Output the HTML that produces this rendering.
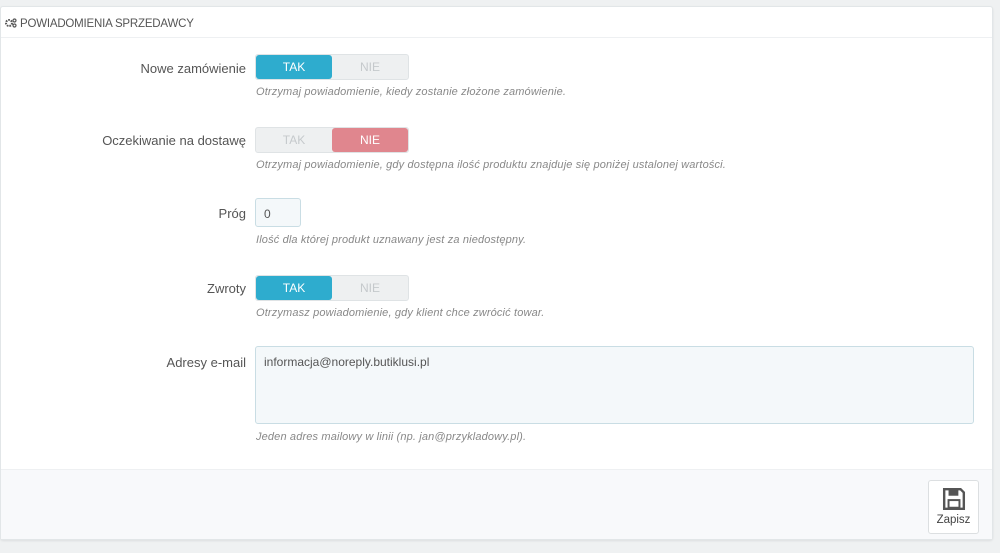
<!DOCTYPE html>
<html><head><meta charset="utf-8"><style>
*{box-sizing:border-box;margin:0;padding:0}
body{width:1000px;height:553px;background:#eff1f2;font-family:"Liberation Sans",sans-serif;position:relative;overflow:hidden;color:#555}
.panel{position:absolute;left:0;top:6px;width:993px;height:534px;background:#fff;border:1px solid #e2e6e8;border-radius:3px;box-shadow:0 1px 2px rgba(0,0,0,.08)}
.hd{position:absolute;left:0;top:0;right:0;height:31px;border-bottom:1px solid #eef0f2;font-size:11.5px;color:#555;padding:11px 0 0 4px;letter-spacing:-.2px}
.lbl{position:absolute;right:754px;font-size:13px;color:#555;text-align:right;white-space:nowrap}
.tg{position:absolute;left:255px;width:154px;height:26px;border-radius:3px;background:#eef0f1;border:1px solid #dfe3e5;display:flex;font-size:12px}
.tg span{flex:1;text-align:center;line-height:24px;color:#c5c9cc}
.tg .on{background:#2eacce;color:#fff;border-radius:3px}
.tg .no{background:#e0868e;color:#fff;border-radius:3px}
.help{position:absolute;left:256px;font-size:11px;font-style:italic;color:#888;letter-spacing:.15px}
.inp{position:absolute;left:255px;top:198px;width:46px;height:29px;background:#f4f8fa;border:1px solid #c9dde4;border-radius:3px;font-size:12px;color:#555;padding:8px 0 0 8px}
.ta{position:absolute;left:255px;top:346px;width:719px;height:78px;background:#f4f8fa;border:1px solid #c9dde4;border-radius:3px;font-size:12px;color:#555;padding:8px 0 0 8px}
.ft{position:absolute;left:0;right:0;top:462px;bottom:0;background:#f8f9fb;border-top:1px solid #eef0f2}
.btn{position:absolute;left:928px;top:480px;width:51px;height:54px;background:#fff;border:1px solid #dcdfe1;border-radius:3px;font-size:11.5px;color:#444;text-align:center}
</style></head><body>
<div class="panel">
<div class="hd"><svg width="12" height="10" viewBox="0 0 12 10" style="vertical-align:-1px"><circle cx="4" cy="5" r="3" fill="none" stroke="#555" stroke-width="2" stroke-dasharray="1.6 1"/><circle cx="9.5" cy="2.5" r="1.5" fill="none" stroke="#555" stroke-width="1.2"/><circle cx="9.5" cy="7.5" r="1.5" fill="none" stroke="#555" stroke-width="1.2"/></svg> POWIADOMIENIA SPRZEDAWCY</div>
<div class="ft"></div>
</div>
<div class="lbl" style="top:61px">Nowe zamówienie</div>
<div class="tg" style="top:54px"><span class="on">TAK</span><span>NIE</span></div>
<div class="help" style="top:86px">Otrzymaj powiadomienie, kiedy zostanie złożone zamówienie.</div>
<div class="lbl" style="top:133px">Oczekiwanie na dostawę</div>
<div class="tg" style="top:127px"><span>TAK</span><span class="no">NIE</span></div>
<div class="help" style="top:159px">Otrzymaj powiadomienie, gdy dostępna ilość produktu znajduje się poniżej ustalonej wartości.</div>
<div class="lbl" style="top:206px">Próg</div>
<div class="inp">0</div>
<div class="help" style="top:234px">Ilość dla której produkt uznawany jest za niedostępny.</div>
<div class="lbl" style="top:281px">Zwroty</div>
<div class="tg" style="top:275px"><span class="on">TAK</span><span>NIE</span></div>
<div class="help" style="top:307px">Otrzymasz powiadomienie, gdy klient chce zwrócić towar.</div>
<div class="lbl" style="top:355px">Adresy e-mail</div>
<div class="ta">informacja@noreply.butiklusi.pl</div>
<div class="help" style="top:431px">Jeden adres mailowy w linii (np. jan@przykladowy.pl).</div>
<div class="btn"><svg width="24" height="24" viewBox="0 0 22 22" style="margin-top:6px"><path d="M2 2h15l3 3v15H2z" fill="none" stroke="#555" stroke-width="2.2"/><rect x="6" y="2" width="9" height="6" fill="#555"/><rect x="6" y="12" width="10" height="7" fill="none" stroke="#555" stroke-width="1.8"/></svg><div style="margin-top:0">Zapisz</div></div>
</body></html>
